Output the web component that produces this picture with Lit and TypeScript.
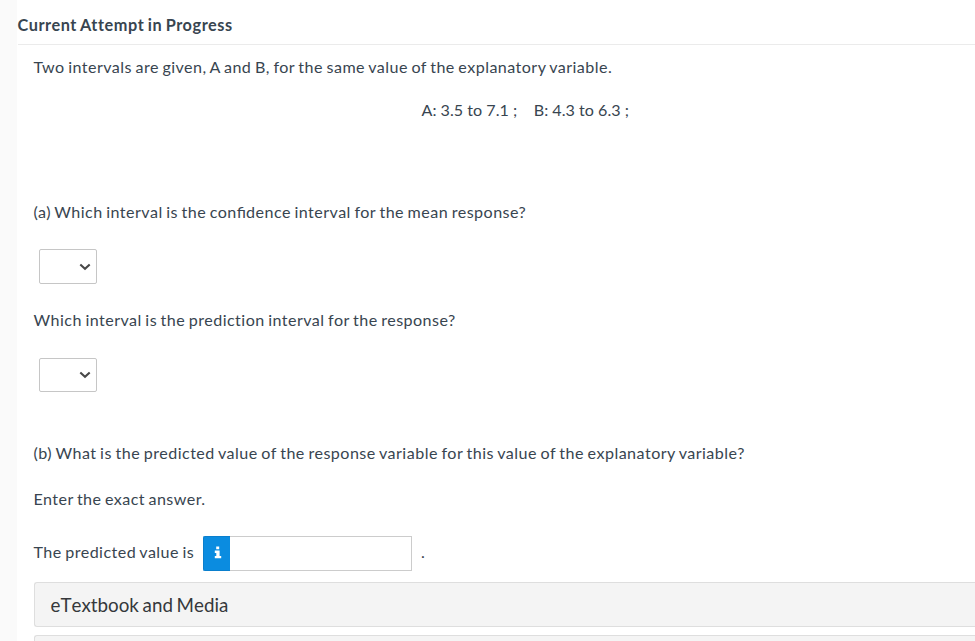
import { LitElement, html, css } from "lit";
import { customElement } from "lit/decorators.js";

@customElement("app-root")
class AppRoot extends LitElement {
  static styles = css`
    :host {
      display: block;
      height: 641px;
      overflow: hidden;
      box-sizing: border-box;
      padding-left: 17.5px;
      background: linear-gradient(to right, #fafafa 17px, #fff 17px);
      font-family: Lato, sans-serif;
      font-size: 16.1px;
      line-height: 24px;
      color: #384550;
    }
    * { box-sizing: border-box; }
    .title { height: 45px; padding-top: 13px; font-weight: 700; border-bottom: 1px solid #ebebeb; font-size: 16.3px; letter-spacing: 0.56px; word-spacing: -1px; }
    .body { padding-left: 16px; display: flex; flex-direction: column; }
    .line { white-space: pre; height: 24px; letter-spacing: 0.45px; word-spacing: -1px; }
    .lig { letter-spacing: 0; }
    .intro { margin-top: 10px; }
    .values { margin-top: 19px; padding-left: 388px; letter-spacing: 0.02px; word-spacing: 0; }
    .qa { margin-top: 78px; letter-spacing: 0.46px; }
    .pick { margin: 25px 0 0 5px; width: 58px; height: 35px; border: 1px solid #c6c6c6; border-radius: 2px; display: flex; align-items: center; justify-content: flex-end; padding-right: 4px; }
    .qp { margin-top: 24px; }
    .second { margin-top: 26px; height: 34px; }
    .second svg { margin-top: -1px; }
    .qb { margin-top: 49px; letter-spacing: 0.47px; }
    .enter { margin-top: 22px; letter-spacing: 0.43px; }
    .answer { margin-top: 25px; height: 35px; display: flex; align-items: center; }
    .label { letter-spacing: 0.45px; word-spacing: -1px; width: 169.5px; margin-top: -3px; }
    .info { width: 27px; height: 35px; background: #0b8ce0; border: 1px solid #0a7fcd; border-right: 0; border-radius: 2px 0 0 2px; display: flex; align-items: center; justify-content: center; padding: 0 0 3px 1px; }
    .field { width: 182px; height: 35px; border: 1px solid #cccccc; border-left: 0; }
    .dot { margin: -3px 0 0 9px; }
    .panel { margin-top: 11px; height: 45px; border: 1px solid #dedede; border-right: 0; border-radius: 3px 0 0 3px; background: #f4f4f4; padding: 10px 16px; font-size: 18.8px; color: #35383b; font-variant-ligatures: none; font-kerning: none; word-spacing: -1.1px; }
    .next { margin-top: 8px; }
  `;

  chevron() {
    return html`<svg width="14" height="10" viewBox="0 0 14 10"><path d="M2.3 2.5 L7 6.8 L11.7 2.5" fill="none" stroke="#484848" stroke-width="2.1"/></svg>`;
  }

  render() {
    return html`
      <div class="title">Current Attempt in Progress</div>
      <div class="body">
        <div class="line intro">Two intervals are given, A and B, for the same value of the explanatory variable.</div>
        <div class="line values">A: 3.5 to 7.1 ;    B: 4.3 to 6.3 ;</div>
        <div class="line qa">(a) Which interval is the con<span class="lig">fi</span>dence interval for the mean response?</div>
        <div class="pick">${this.chevron()}</div>
        <div class="line qp">Which interval is the prediction interval for the response?</div>
        <div class="pick second">${this.chevron()}</div>
        <div class="line qb">(b) What is the predicted value of the response variable for this value of the explanatory variable?</div>
        <div class="line enter">Enter the exact answer.</div>
        <div class="answer">
          <span class="label">The predicted value is</span>
          <span class="info"><svg width="8" height="13" viewBox="0 0 8 13"><path fill="#fff" d="M2.2 0.5h3v2.8h-3zM0.8 4.6h4.8v5.3H7.2V12.3H0.8V9.9h1.5V7H0.8z"/></svg></span>
          <span class="field"></span>
          <span class="dot">.</span>
        </div>
        <div class="panel">eTextbook and Media</div>
        <div class="panel next"></div>
      </div>
    `;
  }
}
